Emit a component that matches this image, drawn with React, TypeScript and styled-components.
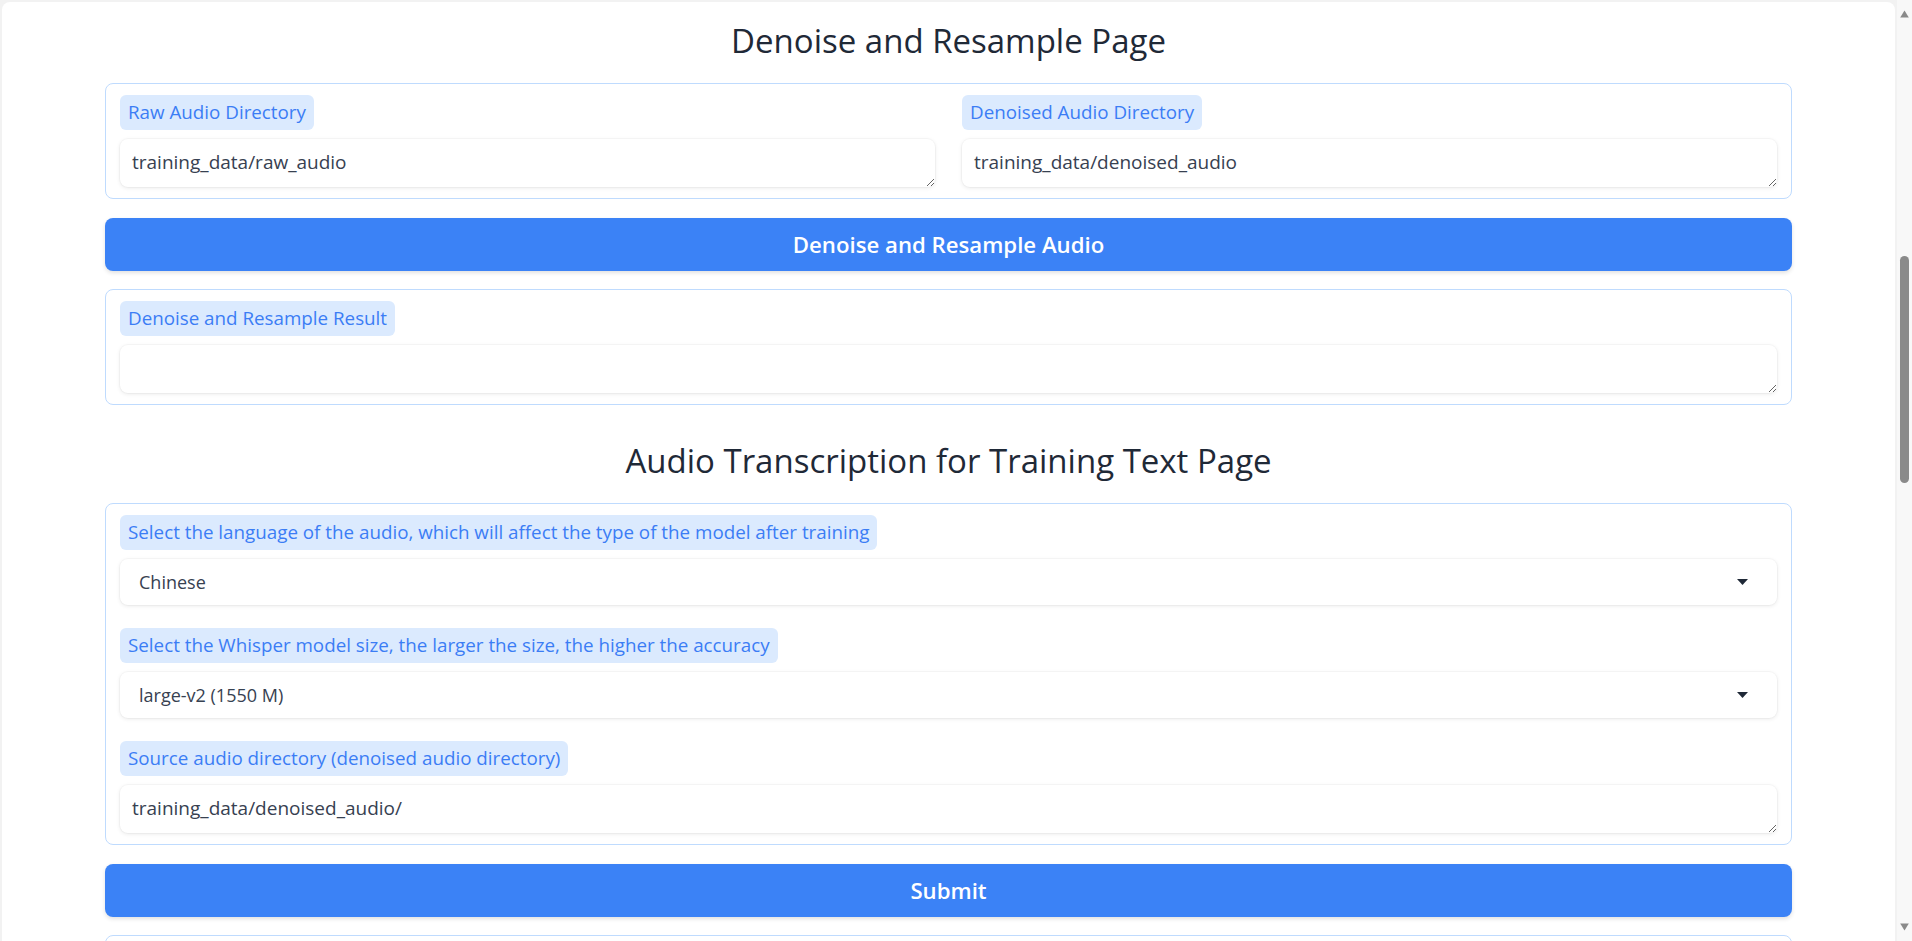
import React from "react";
import styled, { createGlobalStyle } from "styled-components";

const GlobalStyle = createGlobalStyle`
  html, body { height: 100%; }
  body {
    margin: 0;
    overflow: hidden;
    background: #f2f2f2;
    font-family: "Open Sans", "Noto Sans", sans-serif;
    color: #1f2937;
  }
  * { box-sizing: border-box; }
`;

/* ---------- window frame ---------- */

const Viewport = styled.div`
  display: flex;
  height: 100vh;
  overflow: hidden;
`;

const ScrollArea = styled.div`
  flex: 1;
  min-width: 0;
  overflow: hidden;
`;

const Rail = styled.div`
  flex: none;
  width: 15px;
  display: flex;
  flex-direction: column;
  align-items: center;
  background: #f8f8f8;
`;

const RailButton = styled.div`
  flex: none;
  height: 28px;
  width: 100%;
  display: flex;
  align-items: center;
  justify-content: center;
  color: #8a8a8a;
`;

const RailTrack = styled.div`
  flex: 1;
  width: 100%;
  display: flex;
  flex-direction: column;
  align-items: center;
`;

const Thumb = styled.div`
  margin-top: 228px;
  width: 9px;
  height: 227px;
  border-radius: 5px;
  background: #8a8a8a;
`;

/* ---------- page ---------- */

const Card = styled.div`
  margin: 2px 2px 0;
  background: #ffffff;
  border-radius: 8px 8px 0 0;
  padding: 19px 0 40px;
  min-height: calc(100vh - 2px);
`;

const Content = styled.main`
  width: 1687px;
  margin: 0 auto;
  display: flex;
  flex-direction: column;
`;

const PageTitle = styled.h2<{ $top?: number }>`
  margin: ${(p) => p.$top ?? 0}px 0 22px;
  font-size: 33px;
  line-height: 40px;
  font-weight: 400;
  text-align: center;
  color: #1f2937;
`;

const Block = styled.section`
  border: 1px solid #bfdbfe;
  border-radius: 8px;
  padding: 11px 14px;
  background: #ffffff;
  display: flex;
  flex-direction: column;
  gap: 23px;
`;

const Columns = styled.div`
  display: grid;
  grid-template-columns: 1fr 1fr;
  gap: 27px;
`;

const Field = styled.div`
  display: flex;
  flex-direction: column;
  align-items: flex-start;
  gap: 9px;
`;

const Label = styled.span`
  display: inline-flex;
  align-items: center;
  height: 35px;
  padding: 0 8px;
  border-radius: 6px;
  background: #dbeafe;
  color: #3b7df5;
  font-size: 18.8px;
  line-height: 35px;
  white-space: nowrap;
`;

const TextArea = styled.textarea`
  display: block;
  width: 100%;
  height: 48px;
  padding: 11px 12px;
  border: none;
  border-radius: 8px;
  background: #ffffff;
  box-shadow: 0 0 0 1px rgba(0, 0, 0, 0.025), 0 1px 4px rgba(0, 0, 0, 0.09);
  font-family: "Open Sans", "Noto Sans", sans-serif;
  font-size: 19px;
  line-height: 24px;
  color: #374151;
  resize: vertical;
  outline: none;
`;

const Select = styled.div`
  display: flex;
  align-items: center;
  justify-content: space-between;
  width: 100%;
  height: 46px;
  padding: 0 29px 0 19px;
  border-radius: 8px;
  background: #ffffff;
  box-shadow: 0 0 0 1px rgba(0, 0, 0, 0.025), 0 1px 4px rgba(0, 0, 0, 0.09);
  font-size: 18px;
  color: #374151;
  cursor: pointer;
`;

const Caret = styled.svg`
  width: 11px;
  height: 6px;
  flex: none;
  color: #1f2937;
`;

const PrimaryButton = styled.button`
  margin: 19px 0 18px;
  height: 53px;
  width: 100%;
  border: none;
  border-radius: 8px;
  background: #3b82f6;
  color: #ffffff;
  font-family: "Open Sans", "Noto Sans", sans-serif;
  font-size: 22.2px;
  font-weight: 600;
  box-shadow: 0 2px 4px rgba(0, 0, 0, 0.12);
  cursor: pointer;
`;

function Dropdown({ value }: { value: string }) {
  return (
    <Select>
      <span>{value}</span>
      <Caret viewBox="0 0 11 6" aria-hidden>
        <path d="M0 0 H11 L5.5 6 Z" fill="currentColor" />
      </Caret>
    </Select>
  );
}

function TextField({ label, value }: { label: string; value: string }) {
  return (
    <Field>
      <Label>{label}</Label>
      <TextArea defaultValue={value} rows={1} />
    </Field>
  );
}

function Scrollbar() {
  return (
    <Rail aria-hidden>
      <RailButton>
        <svg width="9" height="8" viewBox="0 0 9 8">
          <path d="M4.5 0.5 L8.8 7.5 H0.2 Z" fill="currentColor" />
        </svg>
      </RailButton>
      <RailTrack>
        <Thumb />
      </RailTrack>
      <RailButton>
        <svg width="9" height="8" viewBox="0 0 9 8">
          <path d="M0.2 0.5 H8.8 L4.5 7.5 Z" fill="currentColor" />
        </svg>
      </RailButton>
    </Rail>
  );
}

export default function App() {
  return (
    <>
      <GlobalStyle />
      <Viewport>
        <ScrollArea>
          <Card>
            <Content>
              <PageTitle>Denoise and Resample Page</PageTitle>
              <Block>
                <Columns>
                  <TextField label="Raw Audio Directory" value="training_data/raw_audio" />
                  <TextField label="Denoised Audio Directory" value="training_data/denoised_audio" />
                </Columns>
              </Block>
              <PrimaryButton>Denoise and Resample Audio</PrimaryButton>
              <Block>
                <TextField label="Denoise and Resample Result" value="" />
              </Block>

              <PageTitle $top={36}>Audio Transcription for Training Text Page</PageTitle>
              <Block>
                <Field>
                  <Label>
                    Select the language of the audio, which will affect the type of the model after training
                  </Label>
                  <Dropdown value="Chinese" />
                </Field>
                <Field>
                  <Label>Select the Whisper model size, the larger the size, the higher the accuracy</Label>
                  <Dropdown value="large-v2 (1550 M)" />
                </Field>
                <TextField
                  label="Source audio directory (denoised audio directory)"
                  value="training_data/denoised_audio/"
                />
              </Block>
              <PrimaryButton>Submit</PrimaryButton>
              <Block>
                <TextArea rows={1} defaultValue="" />
              </Block>
            </Content>
          </Card>
        </ScrollArea>
        <Scrollbar />
      </Viewport>
    </>
  );
}
